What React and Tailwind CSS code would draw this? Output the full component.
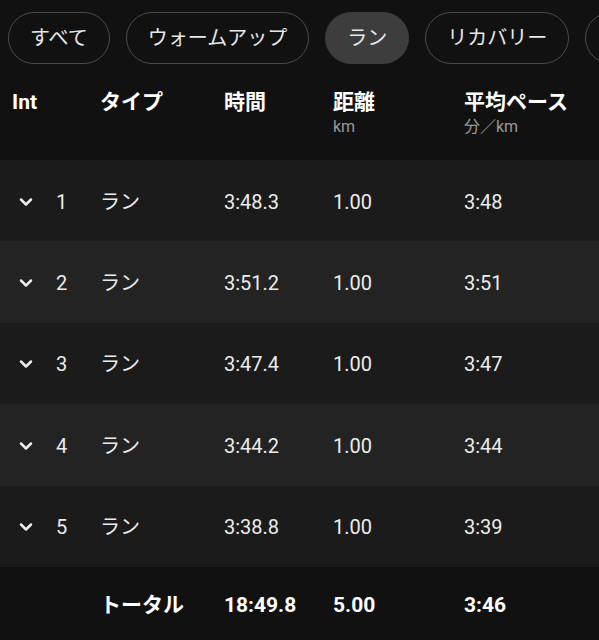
import { ChevronDown } from 'lucide-react';

const FONT = { fontFamily: 'Roboto, "Noto Sans CJK JP", sans-serif' };

const CHIPS = [
  { label: 'すべて' },
  { label: 'ウォームアップ' },
  { label: 'ラン', active: true },
  { label: 'リカバリー' },
  { label: 'クールダウン' },
];

const LAPS = [
  { n: 1, time: '3:48.3', dist: '1.00', pace: '3:48' },
  { n: 2, time: '3:51.2', dist: '1.00', pace: '3:51' },
  { n: 3, time: '3:47.4', dist: '1.00', pace: '3:47' },
  { n: 4, time: '3:44.2', dist: '1.00', pace: '3:44' },
  { n: 5, time: '3:38.8', dist: '1.00', pace: '3:39' },
];

function Chip({ label, active }) {
  return (
    <div
      className={`shrink-0 h-[52px] px-[21px] rounded-full flex items-center text-[20px] text-[#e8e8e8] ${
        active ? 'bg-[#3d3d3d] border-[1.5px] border-[#3d3d3d]' : 'border-[1.5px] border-[#4a4a4a]'
      }`}
    >
      {label}
    </div>
  );
}

export default function App() {
  return (
    <div className="w-[599px] h-[640px] overflow-hidden bg-[#111111] text-[#ececec]" style={FONT}>
      <div className="flex gap-4 pl-2 pt-3 overflow-hidden">
        {CHIPS.map((c) => <Chip key={c.label} {...c} />)}
      </div>

      <div className="h-[96px] flex pt-[25px] text-white">
        <div className="w-[100px] pl-3 text-[21px] leading-[26px] font-bold">Int</div>
        <div className="w-[124px] text-[21px] leading-[26px] font-bold">タイプ</div>
        <div className="w-[109px] text-[21px] leading-[26px] font-bold">時間</div>
        <div className="w-[131px]">
          <div className="text-[21px] leading-[26px] font-bold">距離</div>
          <div className="text-[16px] leading-5 mt-[2px] text-[#9a9a9a]">km</div>
        </div>
        <div>
          <div className="text-[21px] leading-[26px] font-bold">平均ペース</div>
          <div className="text-[16px] leading-5 mt-[2px] text-[#9a9a9a]">分／km</div>
        </div>
      </div>

      {LAPS.map((l, i) => (
        <div
          key={l.n}
          className={`h-[81.4px] flex items-center text-[20px] pt-[2px] ${i % 2 === 0 ? 'bg-[#1b1b1b]' : 'bg-[#232323]'}`}
        >
          <div className="w-[100px] flex items-center">
            <ChevronDown className="ml-[16px] w-[20px] h-[20px]" strokeWidth={3} />
            <span className="ml-[20px]">{l.n}</span>
          </div>
          <div className="w-[124px]">ラン</div>
          <div className="w-[109px]">{l.time}</div>
          <div className="w-[131px]">{l.dist}</div>
          <div>{l.pace}</div>
        </div>
      ))}

      <div className="h-[73px] flex items-center pt-[4px] text-[21px] font-bold text-white">
        <div className="w-[100px]" />
        <div className="w-[124px]">トータル</div>
        <div className="w-[109px]">18:49.8</div>
        <div className="w-[131px]">5.00</div>
        <div>3:46</div>
      </div>
    </div>
  );
}
